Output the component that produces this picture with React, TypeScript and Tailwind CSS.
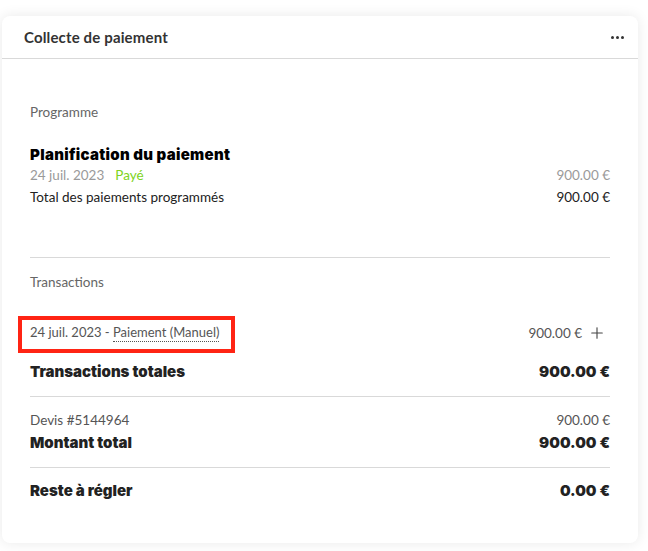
import { Plus } from "lucide-react";

const body = "font-['Lato','Liberation_Sans',sans-serif]";
const heavy = "font-['Inter','Liberation_Sans',sans-serif] font-black";

function Row({ left, right, className = "" }: { left: React.ReactNode; right?: React.ReactNode; className?: string }) {
  return (
    <div className={`flex h-5 items-center justify-between ${className}`}>
      <div className="flex items-center">{left}</div>
      {right}
    </div>
  );
}

export default function App() {
  return (
    <div className={`min-h-screen bg-white px-[2px] pt-4 pb-2 ${body}`}>
      <div className="w-[636px] rounded-lg bg-white shadow-[0_0_14px_rgba(0,0,0,0.09)]">
        <div className="flex h-[43px] items-center justify-between border-b border-[#d9d9d9] pl-[22px] pr-[14px]">
          <h3 className="text-[15px] font-bold tracking-[0.01em] text-[#333]">Collecte de paiement</h3>
          <div className="flex gap-[2px]">
            <span className="h-[3px] w-[3px] rounded-full bg-[#333]" />
            <span className="h-[3px] w-[3px] rounded-full bg-[#333]" />
            <span className="h-[3px] w-[3px] rounded-full bg-[#333]" />
          </div>
        </div>

        <div className="px-7 pt-[43px] pb-[42px] text-[13.5px]">
          <Row left={<span className="text-[#666]">Programme</span>} />

          <Row
            className="mt-[23px]"
            left={<span className={`text-[15px] tracking-[0.02em] text-black ${heavy}`}>Planification du paiement</span>}
          />
          <Row
            left={
              <>
                <span className="text-[#9a9a9a]">24 juil. 2023</span>
                <span className="ml-[11px] text-[#7ed321]">Payé</span>
              </>
            }
            right={<span className="text-[#9a9a9a]">900.00 €</span>}
          />
          <Row
            className="mt-[2px]"
            left={<span className="text-[#222]">Total des paiements programmés</span>}
            right={<span className="text-[#222]">900.00 €</span>}
          />

          <div className="mt-[50px] h-px bg-[#d9d9d9]" />

          <Row className="mt-[14px]" left={<span className="text-[#666]">Transactions</span>} />

          <div className="relative mt-[31px] flex h-5 items-center justify-between">
            <div className="text-[13px] text-[#555]">
              24 juil. 2023 -{" "}
              <span className="border-b border-dotted border-[#555] pb-[1px]">Paiement (Manuel)</span>
            </div>
            <div className="flex items-center gap-[6px] text-[#555]">
              <span>900.00 €</span>
              <Plus size={18} strokeWidth={1.5} className="mr-[4px] text-[#444]" />
            </div>
            <div className="pointer-events-none absolute -left-3 -top-[7px] h-[37px] w-[217px] border-[4px] border-[#ff2414]" />
          </div>

          <Row
            className="mt-[19px]"
            left={<span className={`text-[15px] text-[#222] ${heavy}`}>Transactions totales</span>}
            right={<span className={`text-[15px] text-[#222] ${heavy}`}>900.00 €</span>}
          />

          <div className="mt-[14px] h-px bg-[#d9d9d9]" />

          <Row
            className="mt-[13px]"
            left={<span className="text-[#555]">Devis #5144964</span>}
            right={<span className="text-[#555]">900.00 €</span>}
          />
          <Row
            className="mt-[3px]"
            left={<span className={`text-[15px] text-[#222] ${heavy}`}>Montant total</span>}
            right={<span className={`text-[15px] text-[#222] ${heavy}`}>900.00 €</span>}
          />

          <div className="mt-[14px] h-px bg-[#d9d9d9]" />

          <Row
            className="mt-[13px]"
            left={<span className={`text-[15px] text-[#222] ${heavy}`}>Reste à régler</span>}
            right={<span className={`text-[15px] text-[#222] ${heavy}`}>0.00 €</span>}
          />
        </div>
      </div>
    </div>
  );
}
